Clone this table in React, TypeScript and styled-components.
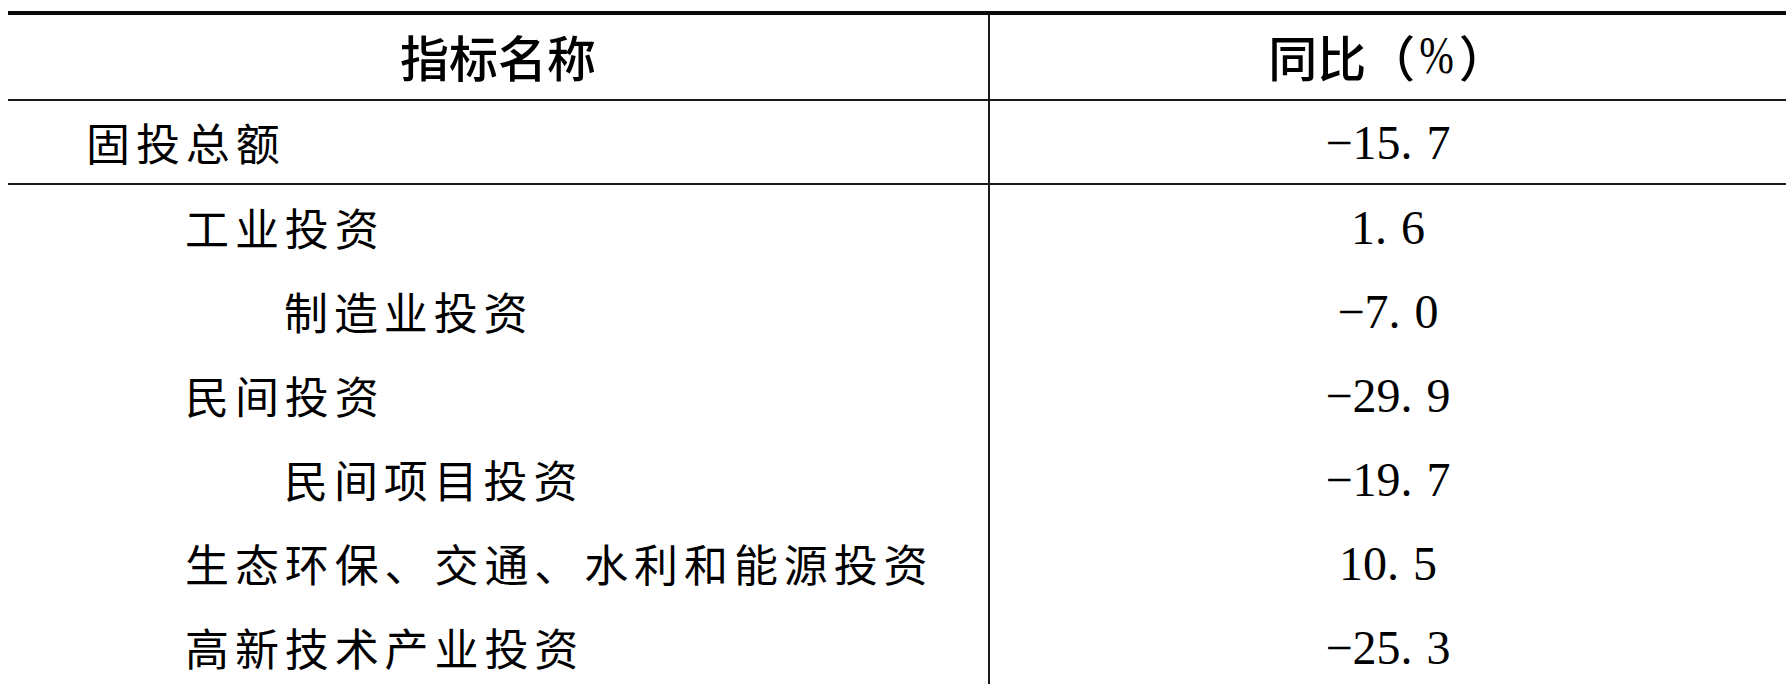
import React from "react";
import styled, { createGlobalStyle } from "styled-components";

const GlobalStyle = createGlobalStyle`
  html, body {
    margin: 0;
    padding: 0;
    background: #ffffff;
  }
  body {
    width: 1786px;
    height: 684px;
    overflow: hidden;
  }
`;

const Page = styled.div`
  padding: 11px 0 0 8px;
  box-sizing: border-box;
  width: 1786px;
  height: 684px;
  overflow: hidden;
`;

const Table = styled.div`
  display: flex;
  flex-direction: column;
  border-top: 4px solid #0a0a0a;
  width: 1778px;
`;

const Row = styled.div<{ $h: number; $ruled?: boolean }>`
  display: grid;
  grid-template-columns: 980px 1fr;
  height: ${(p) => p.$h}px;
  box-sizing: border-box;
  border-bottom: ${(p) => (p.$ruled ? "2px solid #1a1a1a" : "none")};
  flex-shrink: 0;
`;

const NameCell = styled.div<{ $level: number }>`
  display: flex;
  align-items: center;
  padding-left: ${(p) => 78 + p.$level * 99}px;
  font-family: "Noto Sans CJK SC", "Noto Sans", sans-serif;
  font-size: 44px;
  letter-spacing: 5.9px;
  color: #000;
  white-space: nowrap;
`;

const ValueCell = styled.div`
  display: flex;
  align-items: center;
  justify-content: center;
  border-left: 2px solid #1a1a1a;
  font-family: "Liberation Serif", "Times New Roman", serif;
  font-size: 48px;
  color: #000;
  white-space: nowrap;
`;

const HeadCell = styled.div<{ $divider?: boolean }>`
  display: flex;
  align-items: center;
  justify-content: center;
  padding-bottom: 4px;
  box-sizing: border-box;
  border-left: ${(p) => (p.$divider ? "2px solid #1a1a1a" : "none")};
  font-family: "Noto Sans CJK SC", "Noto Sans", sans-serif;
  font-weight: 500;
  font-size: 49px;
  color: #000;
  white-space: nowrap;
`;

const Percent = styled.span`
  font-family: "Liberation Serif", "Times New Roman", serif;
  font-weight: 400;
  font-size: 52px;
  display: inline-block;
  transform: scaleX(0.8);
`;

const Dot = styled.span`
  margin-right: 14px;
`;

type Item = { name: string; level: number; value: string };

const items: Item[] = [
  { name: "固投总额", level: 0, value: "-15.7" },
  { name: "工业投资", level: 1, value: "1.6" },
  { name: "制造业投资", level: 2, value: "-7.0" },
  { name: "民间投资", level: 1, value: "-29.9" },
  { name: "民间项目投资", level: 2, value: "-19.7" },
  { name: "生态环保、交通、水利和能源投资", level: 1, value: "10.5" },
  { name: "高新技术产业投资", level: 1, value: "-25.3" },
];

const Value: React.FC<{ v: string }> = ({ v }) => {
  const negative = v.startsWith("-");
  const body = negative ? v.slice(1) : v;
  const [intPart, frac] = body.split(".");
  return (
    <>
      {negative ? "\u2212" : ""}
      {intPart}
      <Dot>.</Dot>
      {frac}
    </>
  );
};

export default function App() {
  return (
    <>
      <GlobalStyle />
      <Page>
        <Table>
          <Row $h={86} $ruled>
            <HeadCell>指标名称</HeadCell>
            <HeadCell $divider>
              同比（<Percent>%</Percent>）
            </HeadCell>
          </Row>
          {items.map((it, i) => (
            <Row key={it.name} $h={84} $ruled={i === 0}>
              <NameCell $level={it.level}>{it.name}</NameCell>
              <ValueCell>
                <Value v={it.value} />
              </ValueCell>
            </Row>
          ))}
        </Table>
      </Page>
    </>
  );
}
